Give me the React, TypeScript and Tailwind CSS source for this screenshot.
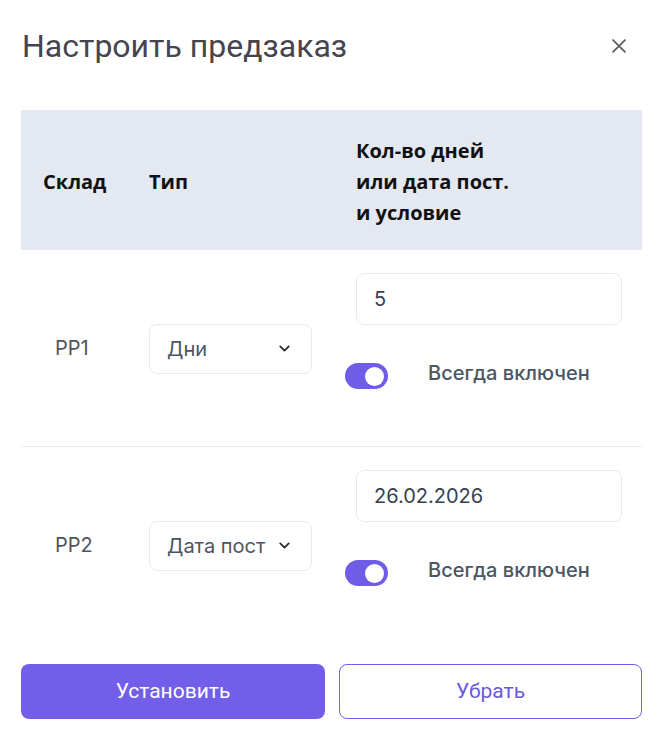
import React from "react";

const Chevron = () => (
  <svg width="17" height="17" viewBox="0 0 24 24" fill="none" stroke="#2d2d36" strokeWidth="2.6" strokeLinecap="round" strokeLinejoin="round">
    <path d="M6 9l6 6 6-6" />
  </svg>
);

const Toggle = () => (
  <div className="w-[43px] h-[26px] rounded-full bg-[#6f5de7] flex items-center justify-end pr-[4px] -ml-[11px] shrink-0">
    <div className="w-[19px] h-[19px] rounded-full bg-white" />
  </div>
);

type RowProps = { name: string; type: string; value: string };

const Row = ({ name, type, value }: RowProps) => (
  <div className="grid grid-cols-[128px_207px_1fr] h-[196px]">
    <div className="flex items-center pl-[34px] text-[20px] text-[#4b5563]">{name}</div>
    <div className="flex items-center">
      <div className="w-[163px] h-[50px] border border-[#e8eaef] rounded-[8px] flex items-center justify-between pl-[17px] pr-[18px] text-[20px] text-[#4b5563] mt-[1px]">
        <span className="whitespace-nowrap">{type}</span>
        <Chevron />
      </div>
    </div>
    <div className="flex flex-col pt-[23px]">
      <div className="w-[266px] h-[52px] border border-[#e8eaef] rounded-[8px] flex items-center pl-[17px] text-[20px] text-[#374151]">
        {value}
      </div>
      <div className="flex items-center mt-[38px]">
        <Toggle />
        <span className="ml-[40px] text-[20px] font-medium text-[#4b5563] -mt-[6px]">Всегда включен</span>
      </div>
    </div>
  </div>
);

export default function App() {
  return (
    <div className="w-[660px] h-[732px] bg-white relative overflow-hidden" style={{ fontFamily: "Inter, 'Noto Sans', sans-serif" }}>
      <div className="flex items-center justify-between pl-[22px] pr-[28px] pt-[24px] h-[68px]">
        <h1 className="text-[32px] text-[#45454f] leading-none" style={{ fontFamily: "Roboto, 'Noto Sans', sans-serif" }}>
          Настроить предзаказ
        </h1>
        <svg width="26" height="26" viewBox="0 0 24 24" fill="none" stroke="#5f5f66" strokeWidth="1.7" strokeLinecap="round">
          <path d="M6.5 6.5l11 11M17.5 6.5l-11 11" />
        </svg>
      </div>
      <div className="ml-[21px] w-[621px] mt-[42px]">
        <div className="grid grid-cols-[128px_207px_1fr] h-[140px] bg-[#e4e8f1] items-center text-[20px] font-bold text-[#111] leading-[31px]" style={{ fontFamily: "'Open Sans', 'Noto Sans', sans-serif" }}>
          <div className="pl-[22px] pt-[2px]">Склад</div>
          <div className="pt-[2px]">Тип</div>
          <div className="pt-[2px]">
            Кол-во дней
            <br />
            или дата пост.
            <br />
            и условие
          </div>
        </div>
        <Row name="PP1" type="Дни" value="5" />
        <div className="h-px bg-[#eceef2]" />
        <Row name="PP2" type="Дата пост" value="26.02.2026" />
        <div className="flex gap-[14px] mt-[21px]" style={{ fontFamily: "Roboto, 'Noto Sans', sans-serif" }}>
          <button className="w-[304px] h-[55px] rounded-[8px] bg-[#735ee9] text-white text-[21px]">Установить</button>
          <button className="flex-1 h-[55px] rounded-[8px] border border-[#735ee9] bg-white text-[#6a58e0] text-[21px]">Убрать</button>
        </div>
      </div>
    </div>
  );
}
